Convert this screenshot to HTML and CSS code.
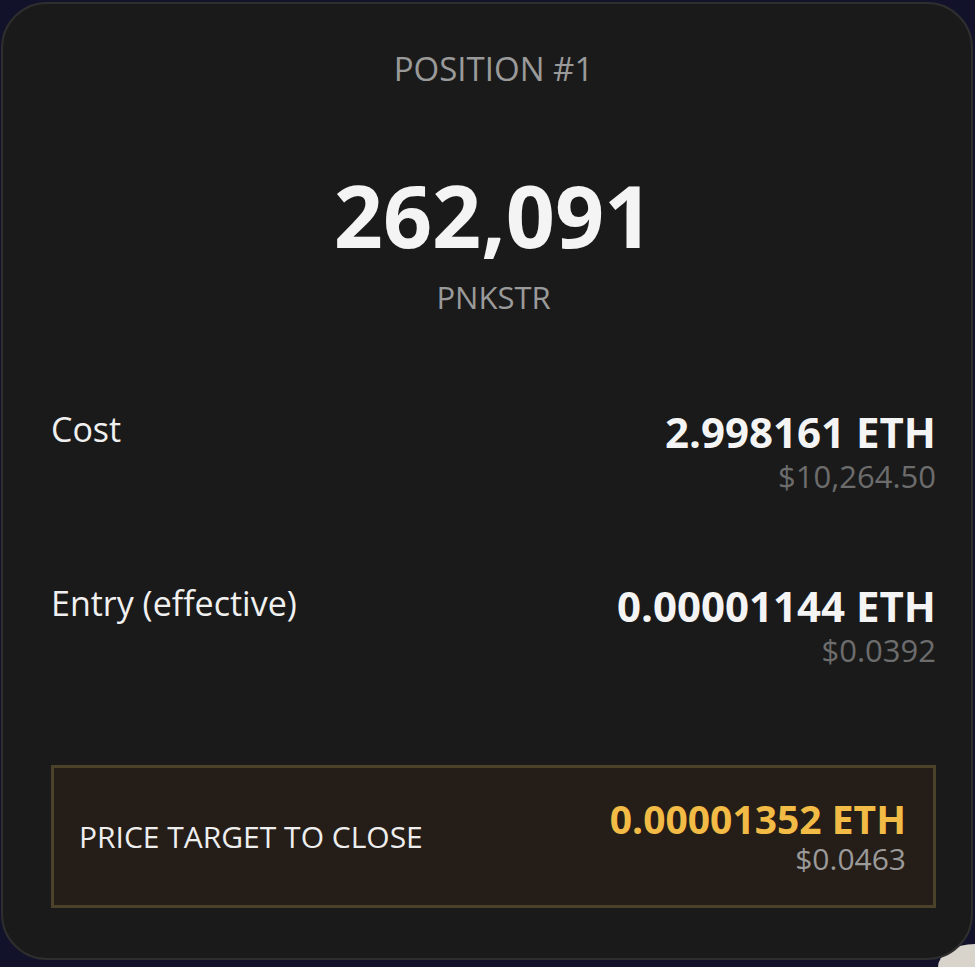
FILE: index.html
```html
<!DOCTYPE html>
<html lang="en">
<head>
    <meta charset="UTF-8">
    <meta name="viewport" content="width=device-width, initial-scale=1.0">
    <title>Position #1</title>
    <link rel="stylesheet" href="styles.css">
</head>
<body>
    <div class="corner-blob"></div>

    <div class="card">
        <div class="title">POSITION #1</div>
        <div class="amount">262,091</div>
        <div class="ticker">PNKSTR</div>

        <div class="row row-cost">
            <div class="label">Cost</div>
            <div class="values">
                <div class="value">2.998161 ETH</div>
                <div class="sub">$10,264.50</div>
            </div>
        </div>

        <div class="row row-entry">
            <div class="label">Entry (effective)</div>
            <div class="values">
                <div class="value">0.00001144 ETH</div>
                <div class="sub">$0.0392</div>
            </div>
        </div>

        <div class="target">
            <div class="target-label">PRICE TARGET TO CLOSE</div>
            <div class="values">
                <div class="target-value">0.00001352 ETH</div>
                <div class="target-sub">$0.0463</div>
            </div>
        </div>
    </div>
</body>
</html>
```

FILE: styles.css
```css
* {
    margin: 0;
    padding: 0;
    box-sizing: border-box;
}

html {
    overflow: hidden;
}

body {
    font-family: 'Open Sans', 'Noto Sans', sans-serif;
    background: #12132b;
    height: 967px;
    overflow: hidden;
    position: relative;
    padding: 2px 0 0 1px;
}

/* light shape peeking in at the bottom right */
.corner-blob {
    position: absolute;
    left: 938px;
    top: 944px;
    width: 37px;
    height: 23px;
    border-top-left-radius: 100% 100%;
    background: #d8d4cc;
}

.card {
    position: relative;
    width: 972px;
    height: 958px;
    background: #1a1a1a;
    border: 2px solid #2e2e2e;
    border-radius: 46px;
    padding: 48px 35px 0 48px;
    line-height: 1;
}

.title {
    text-align: center;
    font-size: 33px;
    color: #9a9a9a;
}

.amount {
    margin-top: 87px;
    text-align: center;
    font-size: 86px;
    font-weight: 700;
    color: #f4f4f4;
}

.ticker {
    margin-top: 24px;
    text-align: center;
    font-size: 31px;
    color: #9a9a9a;
}

.row {
    display: flex;
    justify-content: space-between;
    align-items: flex-start;
}

.row-cost {
    margin-top: 98px;
}

.row-entry {
    margin-top: 93px;
}

.label {
    margin-top: 1px;
    font-size: 34px;
    color: #f0f0f0;
}

.values {
    text-align: right;
}

.value {
    font-size: 42px;
    font-weight: 700;
    color: #f4f4f4;
}

.sub {
    margin-top: 8px;
    font-size: 31px;
    color: #6c6c6c;
}

.target {
    margin-top: 99px;
    height: 143px;
    background: #251d17;
    border: 3px solid #4c4229;
    padding: 0 27px 0 25px;
    display: flex;
    justify-content: space-between;
    align-items: center;
}

.target-label {
    font-size: 30px;
    color: #eeeeee;
}

.target-value {
    font-size: 39px;
    font-weight: 700;
    color: #f2bb45;
}

.target-sub {
    margin-top: 6px;
    font-size: 30px;
    color: #9a9a9a;
}
```
